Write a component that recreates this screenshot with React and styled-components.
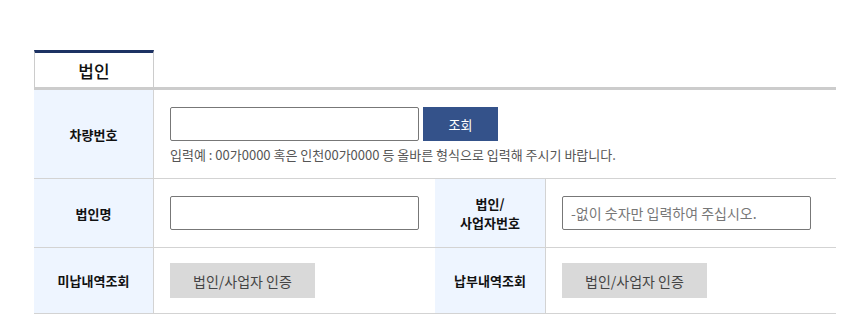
import React from 'react'
import styled, { createGlobalStyle } from 'styled-components'

const Global = createGlobalStyle`
    body {
        margin: 0;
        background: #fff;
        font-family: "Noto Sans CJK KR", "Noto Sans", sans-serif;
        color: #222;
    }
`

const Wrap = styled.div`
    width: 802px;
    padding: 50px 0 0 34px;
`

const Tabs = styled.div`
    display: flex;
`

const Tab = styled.div`
    width: 118px;
    height: 34px;
    border-top: 3px solid #1d3263;
    border-left: 1px solid #ccc;
    border-right: 1px solid #ccc;
    display: flex;
    align-items: center;
    justify-content: center;
    font-size: 17px;
    font-weight: 500;
    color: #111;
`

const Table = styled.div`
    display: grid;
    grid-template-columns: 120px 281px 111px 290px;
    border-top: 3px solid #cccccc;
`

const Label = styled.div`
    box-sizing: border-box;
    height: ${p => p.h}px;
    background: #eef5ff;
    border-right: 1px solid #d3d3d3;
    border-bottom: 1px solid #d3d3d3;
    display: flex;
    align-items: center;
    justify-content: center;
    text-align: center;
    font-size: 13px;
    font-weight: 700;
    line-height: 19px;
    color: #111;
`

const Cell = styled.div`
    box-sizing: border-box;
    grid-column: span ${p => p.span || 1};
    height: ${p => p.h}px;
    border-bottom: 1px solid #d3d3d3;
    display: flex;
    flex-direction: column;
    justify-content: ${p => (p.top ? 'flex-start' : 'center')};
    padding: ${p => (p.top ? '17px' : '0')} 0 0 16px;
`

const Line = styled.div`
    display: flex;
    gap: 4px;
`

const Input = styled.input`
    box-sizing: border-box;
    width: 249px;
    height: 34px;
    border: 1px solid #777;
    border-radius: 2px;
    padding: 0 8px;
    font-family: inherit;
    font-size: 14px;
    color: #333;
    outline: none;
    &::placeholder {
        color: #777;
    }
`

const Search = styled.button`
    width: 75px;
    height: 34px;
    border: none;
    background: #34528a;
    color: #fff;
    font-family: inherit;
    font-size: 13px;
    padding: 0;
`

const Hint = styled.p`
    margin: 4px 0 0;
    font-size: 13px;
    color: #555;
`

const CertButton = styled.button`
    width: 145px;
    height: 35px;
    border: none;
    background: #d9d9d9;
    color: #444;
    font-family: inherit;
    font-size: 14px;
    padding: 0;
`

const App = () => {
    return (
        <Wrap>
            <Global />
            <Tabs>
                <Tab>법인</Tab>
            </Tabs>
            <Table>
                <Label h={89}>차량번호</Label>
                <Cell span={3} h={89} top>
                    <Line>
                        <Input />
                        <Search>조회</Search>
                    </Line>
                    <Hint>
                        입력예 : 00가0000 혹은 인천00가0000 등 올바른 형식으로 입력해 주시기 바랍니다.
                    </Hint>
                </Cell>

                <Label h={69}>법인명</Label>
                <Cell h={69}>
                    <Input />
                </Cell>
                <Label h={69}>
                    법인/
                    <br />
                    사업자번호
                </Label>
                <Cell h={69}>
                    <Input placeholder="-없이 숫자만 입력하여 주십시오." />
                </Cell>

                <Label h={66}>미납내역조회</Label>
                <Cell h={66}>
                    <Line>
                        <CertButton>법인/사업자 인증</CertButton>
                    </Line>
                </Cell>
                <Label h={66}>납부내역조회</Label>
                <Cell h={66}>
                    <Line>
                        <CertButton>법인/사업자 인증</CertButton>
                    </Line>
                </Cell>
            </Table>
        </Wrap>
    )
}

export default App
